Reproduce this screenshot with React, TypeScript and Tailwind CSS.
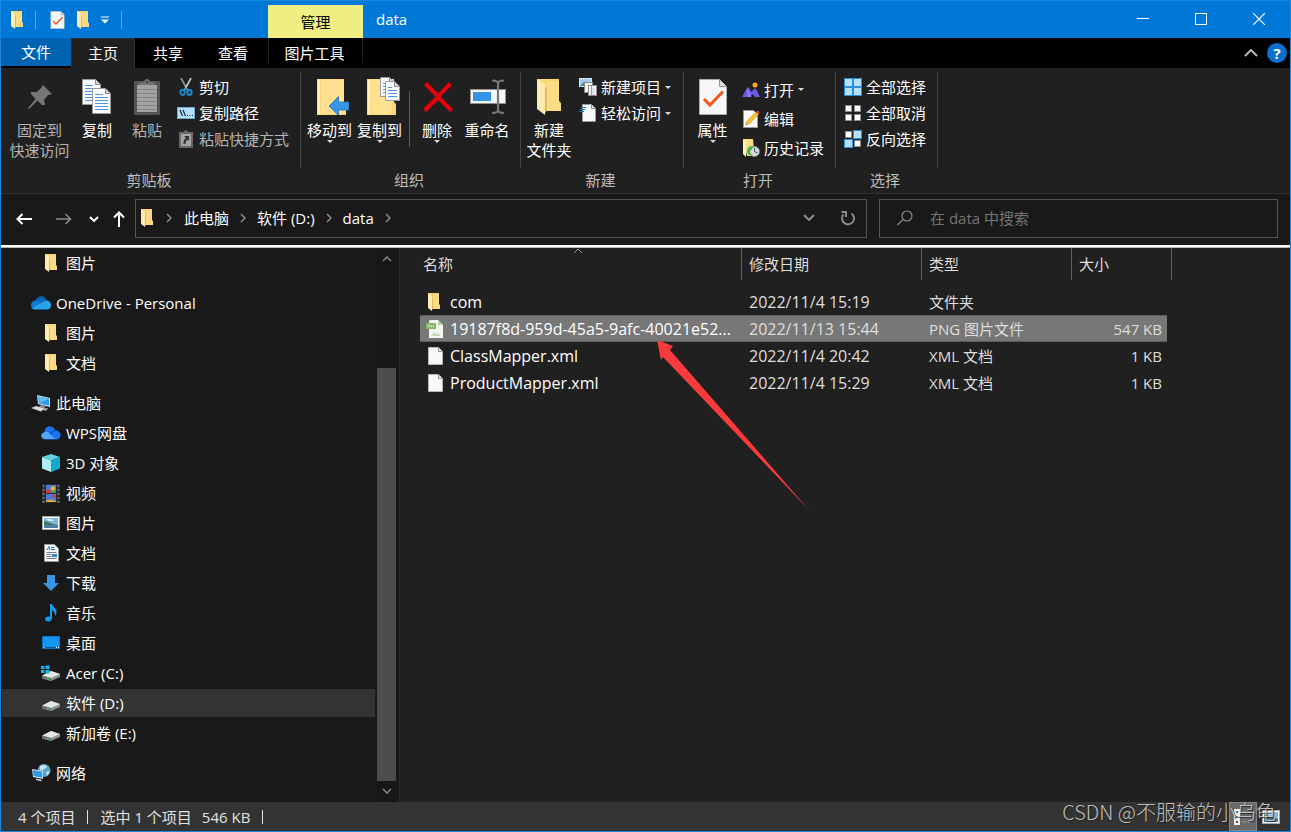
import type { ReactNode } from "react"

/* ---------- icons ---------- */

function Folder({ className = "w-3 h-[18px]" }: { className?: string }) {
  return (
    <svg viewBox="0 0 12 18" className={className} preserveAspectRatio="none">
      <path d="M0 0h11v11l1 1v4H3z" fill="#f7d372" />
      <path d="M5 1h6v11l1 .5V16H4z" fill="#fbdc85" />
      <path d="M0 0l4 2.5V18l-4-3z" fill="#ffecb2" />
      <path d="M4 5v12l.8-1V4z" fill="#d9b252" />
    </svg>
  )
}

function CheckDoc({ className }: { className: string }) {
  return (
    <svg viewBox="0 0 28 36" className={className}>
      <path d="M.5.5h20l7 7v28H.5z" fill="#f6f7f8" stroke="#a9aaac" />
      <path d="M20.5.5v7h7" fill="#dcdde0" stroke="#8f9092" />
      <path d="M5 20l6 6 13-13.500" fill="none" stroke="#f0561d" strokeWidth="3" />
    </svg>
  )
}

function Pin() {
  return (
    <svg viewBox="0 0 26 26" className="w-[26px] h-[26px]">
      <path d="M16 1l9 9-3 1-1 0-4 5 1 5-3 0-4.500-4.500L2 25l-1-1 7.500-9L4 10l0-2 6 0 4-4z" fill="#767676" />
    </svg>
  )
}

function Page({ x, y, w = 19, h = 26 }: { x: number; y: number; w?: number; h?: number }) {
  const lines = [5, 8, 11, 14, 17, 20].filter((l) => l < h - 3)
  return (
    <g transform={`translate(${x} ${y})`}>
      <path d={`M.5.5h${w - 6}l5 5v${h - 6}H.5z`} fill="#fafbfc" stroke="#9a9b9d" />
      <path d={`M${w - 5.5}.5v5h5`} fill="#d5d6d8" stroke="#8a8b8d" />
      {lines.map((l) => (
        <path key={l} d={`M3 ${l + 1.5}h${l < 6 ? w - 11 : w - 6}`} stroke="#4f93ea" />
      ))}
    </g>
  )
}

function Copy() {
  return (
    <svg viewBox="0 0 30 36" className="w-[30px] h-9">
      <Page x={0} y={0} />
      <Page x={10} y={9} />
    </svg>
  )
}

function Paste() {
  return (
    <svg viewBox="0 0 26 36" className="w-[26px] h-9">
      <rect x="0" y="2" width="26" height="34" rx="1" fill="#545454" />
      <rect x="3" y="6" width="20" height="27" fill="#a2a2a2" />
      <path d="M3 10.500h20M3 14.500h20M3 18.500h20M3 22.500h20M3 26.500h20M3 30.500h20" stroke="#858585" />
      <path d="M5 6V4l5-1c0-4 6-4 6 0l5 1v2z" fill="#727272" />
      <circle cx="13" cy="3" r="1" fill="#333" />
    </svg>
  )
}

function Scissors() {
  return (
    <svg viewBox="0 0 14 18" className="w-3.5 h-[18px]" fill="none">
      <path d="M2 0l6.500 12" stroke="#8d9499" strokeWidth="1.600" />
      <path d="M12 0L5.500 12" stroke="#c8ced2" strokeWidth="1.600" />
      <ellipse cx="3.500" cy="14.500" rx="2.200" ry="2.500" stroke="#1b8bd4" strokeWidth="1.800" />
      <ellipse cx="10.500" cy="14.500" rx="2.200" ry="2.500" stroke="#1b8bd4" strokeWidth="1.800" />
      <path d="M5 12l2-2 2 2" stroke="#1b8bd4" strokeWidth="1.500" />
    </svg>
  )
}

function CopyPath() {
  return (
    <svg viewBox="0 0 18 12" className="w-[18px] h-3">
      <rect x=".5" y=".5" width="17" height="11" fill="#b5e0fb" stroke="#74a9cf" />
      <path d="M3 3l2.500 6M6 3l2.500 6" stroke="#102a3c" strokeWidth="1.200" />
      <path d="M10 8.500h1M12.500 8.500h1M15 8.500h1" stroke="#102a3c" />
    </svg>
  )
}

function PasteShortcut() {
  return (
    <svg viewBox="0 0 14 18" className="w-3.5 h-[18px]">
      <path d="M0 2h4l3-2 3 2h4v16H0z" fill="#686868" />
      <rect x="2" y="4" width="10" height="12" fill="#a5a5a5" />
      <path d="M5 6h5v5L8.500 9.500C6.500 11 6.500 12.500 6.500 14h-2c-.5-3 1-5 2.500-6z" fill="#333" />
    </svg>
  )
}

function MoveTo() {
  return (
    <svg viewBox="0 0 32 36" className="w-8 h-9 ml-1.5">
      <path d="M0 0h27v24l2 2v10H0z" fill="#fbd978" />
      <path d="M1 1h2v34H1z" fill="#fff0c0" />
      <path d="M4 1h23v34H4z" fill="#ffe291" />
      <path d="M12 27l9.500-9.500V23H32v8H21.500v5.500z" fill="#3a96e4" stroke="#1f74c0" strokeWidth=".8" />
    </svg>
  )
}

function CopyTo() {
  return (
    <svg viewBox="0 0 34 38" className="w-[34px] h-[38px] -mt-0.5 ml-2">
      <path d="M0 2h27v23l2 2v11H0z" fill="#fbd978" />
      <path d="M1 3h2v34H1z" fill="#fff0c0" />
      <path d="M4 3h21v34H4z" fill="#ffe291" />
      <Page x={13} y={0} w={15} h={20} />
      <Page x={18} y={4} w={15} h={20} />
    </svg>
  )
}

function Delete() {
  return (
    <svg viewBox="0 0 30 36" className="w-[30px] h-9 ml-0.5">
      <path d="M1 6l3-3 11 11.500L26 3l3 3-11.500 11.500L30 30l-3 3-12-12L3 33l-3-3 12.500-12.500z" fill="#e8000d" />
    </svg>
  )
}

function Rename() {
  return (
    <svg viewBox="0 0 36 36" className="w-9 h-9 ml-0.5">
      <rect x=".5" y="10.500" width="35" height="14" fill="#f4f6f8" stroke="#8f9193" />
      <rect x="3" y="13" width="18" height="9" fill="#3494e6" />
      <path d="M28 3v29M22 1.500c4 0 6 1 6 3 0-2 2-3 6-3M22 34c4 0 6-1 6-3 0 2 2 3 6 3" stroke="#77787a" strokeWidth="2.200" fill="none" />
    </svg>
  )
}

function NewItem() {
  return (
    <svg viewBox="0 0 18 18" className="w-[18px] h-[18px]">
      <rect x=".5" y=".5" width="12" height="8" fill="#9ccdf0" stroke="#d5e8f5" />
      <path d="M1 8l4-4 4 4z" fill="#4c8a76" />
      <rect x="5.500" y="4.500" width="8" height="10" fill="#f4f4f4" stroke="#888" />
      <rect x="9.500" y="7.500" width="8" height="10" fill="#fff" stroke="#888" />
      <path d="M11 10h5M11 12h5M11 14h5M11 16h5" stroke="#b9c6d8" />
      <path d="M12.500 8v9" stroke="#e08b8b" />
    </svg>
  )
}

function EasyAccess() {
  return (
    <svg viewBox="0 0 18 18" className="w-[18px] h-[18px]">
      <path d="M3.500.5h9l4 4v13h-13z" fill="#f7f8f9" stroke="#999" />
      <path d="M12.500.5v4h4" fill="#ddd" stroke="#888" />
      <path d="M2 3.500h5M1 5.500h5M0 7.500h5" stroke="#1978c8" />
    </svg>
  )
}

function OpenPicture() {
  return (
    <svg viewBox="0 0 18 16" className="w-[18px] h-4">
      <path d="M0 15L5 6c.5-1 1.500-1 2 0l2.500 4L12 7c.7-.8 1.500-.8 2 0l4 8h-5l-2.500-3L8 15z" fill="#6b5ce8" />
      <path d="M5 6l4.500 9H6z" fill="#9d7cf2" />
      <circle cx="13" cy="3" r="2.500" fill="#ffa51f" />
    </svg>
  )
}

function Edit() {
  return (
    <svg viewBox="0 0 18 18" className="w-[18px] h-[18px]">
      <path d="M1.500.5h10l4 4v13h-14z" fill="#f7f8f9" stroke="#999" />
      <path d="M3.500 15l1-3.500L14 2l2.500 2.500L7 14z" fill="#f5c437" stroke="#c48f18" strokeWidth=".6" />
      <path d="M14 2l1-1c1-.8 3 1 2.300 2l-1 1.200z" fill="#dd5048" />
    </svg>
  )
}

function History() {
  return (
    <svg viewBox="0 0 18 18" className="w-[18px] h-[18px]">
      <path d="M1 0h10l1 11v6H5z" fill="#fbdc85" />
      <path d="M1 0l3 2.500V18l-3-3z" fill="#fff0c0" />
      <circle cx="12.500" cy="12.500" r="5" fill="#d7dade" stroke="#85898d" />
      <path d="M12.500 9v3.500l3 1.500" stroke="#4c4f52" fill="none" />
      <path d="M5 13c0-5 3-6.500 6.500-5.500l-2 3.500c-2 0-2 3 .5 5-3 1-4-.5-5-3z" fill="#3eb449" />
    </svg>
  )
}

const SELECT_CELLS = [[0, 0], [9, 0], [0, 9], [9, 9]]

function SelectGrid({ on }: { on: boolean[] }) {
  return (
    <svg viewBox="0 0 18 18" className="w-[18px] h-[18px]">
      {SELECT_CELLS.map(([x, y], i) =>
        on[i] ? (
          <rect key={i} x={x + 0.5} y={y + 0.5} width="8" height="8" fill="#b9e0fb" stroke="#2a8fdf" />
        ) : (
          <rect key={i} x={x + 1.5} y={y + 1.5} width="6" height="6" fill="#fff" stroke="#8b8b8b" />
        ),
      )}
    </svg>
  )
}

function OneDrive() {
  return (
    <svg viewBox="0 0 20 14" className="w-5 h-3.5">
      <path d="M5 4C7-1 14-1 15.500 4.500L10 9z" fill="#0a63bb" />
      <path d="M0 9.500C0 6 3 3.500 6.500 4.500L14 9 4 13.500C2 13.500 0 12 0 9.500z" fill="#0e7bd6" />
      <path d="M15 4.500c3 0 5 2 5 4.800 0 2.500-1.500 4.200-4 4.200H4c-1.500 0-2.500-.8-3-1.500z" fill="#28a5ea" />
    </svg>
  )
}

function ThisPC() {
  return (
    <svg viewBox="0 0 20 17" className="w-5 h-[17px]">
      <path d="M6 0l13 3v9L7 9z" fill="#d5e1ea" />
      <path d="M7 1.200l11 2.600v7L8 8.300z" fill="#2c9ae6" />
      <path d="M7 1.200l11 2.600-9 4z" fill="#61bdf5" />
      <path d="M10 10l5 1.500-2 1.500-5-1z" fill="#8f979d" />
      <path d="M0 13l5-2 9 2.500-4 3z" fill="#d4d9dd" />
      <path d="M12 14l4-1 1 1-3 2z" fill="#aab2b8" />
    </svg>
  )
}

function WpsCloud() {
  return (
    <svg viewBox="0 0 20 14" className="w-5 h-3.5">
      <path d="M3.500 6C4 1 8-1 11 1c2 .5 3 2 3 3.500 3-.5 6 1.500 5.500 5-.3 2.500-2 4-4.500 4H5c-6 0-6-6-1.500-7.500z" fill="#1b73ef" />
      <path d="M3 6.500c3-2 5 0 7 2.500s4 4 6 4H5c-5.500 0-6-5-2-6.500z" fill="#54a6fb" />
      <path d="M9 8l5-3.500" stroke="#0c4fc4" strokeWidth="1.200" />
    </svg>
  )
}

function Cube() {
  return (
    <svg viewBox="0 0 18 18" className="w-[18px] h-[18px]">
      <path d="M9 0l9 3-9 3.500L0 3z" fill="#5fd3e3" />
      <path d="M0 3l9 3.500V18l-9-3.500z" fill="#aeeef4" />
      <path d="M18 3L9 6.500V18l9-3.500z" fill="#16a8cc" />
    </svg>
  )
}

function Video() {
  return (
    <svg viewBox="0 0 18 19" className="w-[18px] h-[19px]">
      <path d="M0 0h18v19H0z" fill="#2b2c2e" />
      <path d="M1.500 1v18M16.500 1v18" stroke="#6b6d70" strokeWidth="2" strokeDasharray="2 2" />
      <path d="M4 1h10v8H4zM4 10h10v8H4z" fill="#4a78dc" />
      <path d="M4 6l4-1 1 4H4zM10 12l3-2v3l-2 1z" fill="#d63a34" />
      <circle cx="11" cy="4.500" r="2.300" fill="#e0b928" />
      <path d="M4 16.500l5-1 5 1.500v1H4z" fill="#dcae2c" />
      <path d="M9 7h5v2H9z" fill="#3b9c47" />
    </svg>
  )
}

function Picture() {
  return (
    <svg viewBox="0 0 18 14" className="w-[18px] h-3.5">
      <rect x=".5" y=".5" width="17" height="13" fill="#fff" stroke="#a8a8a8" />
      <path d="M2 2h14v10H2z" fill="#7fb9ea" />
      <path d="M2 5c4 0 7 3 14 4v1H2z" fill="#3d7a5e" />
      <path d="M2 9h14v3H2z" fill="#4a7fa8" />
      <path d="M4 3h5l3 2H7z" fill="#e2f2fd" />
    </svg>
  )
}

function TextDoc() {
  return (
    <svg viewBox="0 0 15 18" className="w-[15px] h-[18px]">
      <path d="M.5.5h10l4 4v13H.5z" fill="#f8f9fa" stroke="#9a9a9a" />
      <path d="M3 6l2-3.500L6 6M7 3.500h3M7 5.500h4" stroke="#2578c9" fill="none" />
      <path d="M2.500 8.500h10M2.500 10.500h5M2.500 12.500h5M2.500 14.500h10" stroke="#6d7f91" />
      <path d="M8 10h5v3H8z" fill="#3d85bd" />
    </svg>
  )
}

function Download() {
  return (
    <svg viewBox="0 0 16 16" className="w-4 h-4">
      <path d="M4 0h8v8h4l-8 8-8-8h4z" fill="#3b93e3" />
    </svg>
  )
}

function Music() {
  return (
    <svg viewBox="0 0 12 18" className="w-3 h-[18px]">
      <path d="M5 0h2c.5 3 4.500 4 4.500 8 0 1.500-.5 3-1.500 4 .3-3-1-5-3-5.500V14c0 2-1.500 3.500-3.500 3.500S0 16.500 0 15s2-3 5-2.500z" fill="#159bf0" />
    </svg>
  )
}

function Desktop() {
  return (
    <svg viewBox="0 0 18 14" className="w-[18px] h-3.5">
      <rect x=".5" y=".5" width="17" height="12" fill="#1496f5" stroke="#0a72c6" />
      <path d="M1 11.500h16" stroke="#0a5596" />
      <path d="M1.500 11.500h1M14 11.500h1M16 11.500h1" stroke="#fff" />
    </svg>
  )
}

function Drive({ system = false }: { system?: boolean }) {
  return (
    <svg viewBox="0 0 20 16" className="w-5 h-4">
      <path d="M1 11l9-5 9 3v3l-9 4-9-2.500z" fill="#8e9194" />
      <path d="M1 10.500L10 6l9 3-9 4z" fill="#e3e5e7" />
      <path d="M1 10.500L10 13v3l-9-2.500z" fill="#6d7073" />
      <path d="M6 13.500l2 .5" stroke="#43d64f" strokeWidth="1.500" />
      {system && <path d="M0 1h3.500v3H0zM4.500 .5h4V4h-4zM0 5h3.500v3H0zM4.500 5h4v3.500h-4z" fill="#17b4ee" />}
    </svg>
  )
}

function Network() {
  return (
    <svg viewBox="0 0 19 18" className="w-[19px] h-[18px]">
      <circle cx="12" cy="6.500" r="6.500" fill="#5aa4c9" />
      <path d="M8 2c3-2 6-1 7 1l-4 3-3 0zM14 8l4-1-3 5z" fill="#c3e3ef" />
      <path d="M0 5l11 2v8L1 13z" fill="#cfe6f5" />
      <path d="M.8 6l9.500 1.800v6L1.500 12z" fill="#2b9be8" />
      <path d="M4 14.500l5 1 1 2-6-1.500z" fill="#c4cacd" />
    </svg>
  )
}

function BlankDoc() {
  return (
    <svg viewBox="0 0 15 18" className="w-[15px] h-[18px]">
      <path d="M.5.5h10l4 4v13H.5z" fill="#f8f8f8" stroke="#b5b5b5" />
      <path d="M10.500.5v4h4" fill="#dedede" stroke="#969696" />
    </svg>
  )
}

function PngDoc() {
  return (
    <svg viewBox="0 0 17 18" className="w-[17px] h-[18px]">
      <path d="M4 0h8l5 5v13H3V1z" fill="#f3f7f2" />
      <path d="M12 0v5h5z" fill="#b5cfaa" />
      <rect x="0" y="3" width="10" height="6" fill="#82b366" />
      <path d="M2 7.500V5h1.500v1.500M5 7.500V5l1 2V5M8.500 5H7.500v2h1" stroke="#e5f2de" strokeWidth=".6" fill="none" />
      <path d="M5 16l3-4 2 2 1.500-1.500L15 16z" fill="#c3dcb8" />
    </svg>
  )
}

function Chevron({ d = "M1 1l4 4 4-4", className = "w-2.5 h-1.5", width = 1.5, box = "0 0 10 6" }: { d?: string; className?: string; width?: number; box?: string }) {
  return (
    <svg viewBox={box} className={className} fill="none" stroke="currentColor" strokeWidth={width}>
      <path d={d} />
    </svg>
  )
}

function Caret() {
  return (
    <svg viewBox="0 0 6 3" className="w-1.5 h-[3px] shrink-0">
      <path d="M0 0h6L3 3z" fill="#dcdcdc" />
    </svg>
  )
}

/* ---------- ribbon ---------- */

function BigButton({ icon, lines, width, caret, disabled }: { icon: ReactNode; lines: string[]; width: string; caret?: boolean; disabled?: boolean }) {
  return (
    <button className={`${width} flex flex-col items-center pt-[10px] shrink-0 ${disabled ? "text-[#b4b4b4]" : "text-white"}`}>
      <span className="h-9 mb-[5px] flex items-center justify-center">{icon}</span>
      {lines.map((line) => (
        <span key={line} className="leading-5 whitespace-nowrap">{line}</span>
      ))}
      {caret && <Caret />}
    </button>
  )
}

function SmallButton({ icon, label, caret, disabled, tall }: { icon: ReactNode; label: string; caret?: boolean; disabled?: boolean; tall?: boolean }) {
  return (
    <button className={`flex items-center gap-1 whitespace-nowrap ${tall ? "h-[29px]" : "h-[26px]"} ${disabled ? "text-[#b4b4b4]" : "text-white"}`}>
      <span className="w-[18px] flex justify-center">{icon}</span>
      {label}
      {caret && <Caret />}
    </button>
  )
}

function Group({ label, width, children }: { label: string; width: string; children: ReactNode }) {
  return (
    <section aria-label={label} className={`${width} shrink-0 flex flex-col relative`}>
      <div className="flex-1 flex items-start pl-1">{children}</div>
      <div className="h-[26px] leading-[26px] pr-1 text-center text-[#bdbdbd]">{label}</div>
      <div className="absolute right-0 top-[3px] h-24 w-px bg-[#454545]" />
    </section>
  )
}

function Ribbon() {
  return (
    <div className="h-[125px] bg-[#202020] border-b border-[#303030] flex">
      <Group label="剪贴板" width="w-[300px]">
        <BigButton icon={<Pin />} lines={["固定到", "快速访问"]} width="w-[69px]" disabled />
        <BigButton icon={<Copy />} lines={["复制"]} width="w-[46px]" />
        <BigButton icon={<Paste />} lines={["粘贴"]} width="w-[54px]" disabled />
        <div className="flex flex-col items-start pt-[5px] pl-[3px]">
          <SmallButton icon={<Scissors />} label="剪切" />
          <SmallButton icon={<CopyPath />} label="复制路径" />
          <SmallButton icon={<PasteShortcut />} label="粘贴快捷方式" disabled />
        </div>
      </Group>
      <Group label="组织" width="w-[220px]">
        <BigButton icon={<MoveTo />} lines={["移动到"]} width="w-[49px]" caret />
        <BigButton icon={<CopyTo />} lines={["复制到"]} width="w-[51px]" caret />
        <div className="w-px h-14 bg-[#5a5a5a] mt-[22px] ml-1 mr-0.5" />
        <BigButton icon={<Delete />} lines={["删除"]} width="w-[50px]" caret />
        <BigButton icon={<Rename />} lines={["重命名"]} width="w-[50px]" />
      </Group>
      <Group label="新建" width="w-[163px]">
        <BigButton icon={<Folder className="w-6 h-9" />} lines={["新建", "文件夹"]} width="w-[48px]" />
        <div className="flex flex-col items-start pt-[5px] pl-1.5">
          <SmallButton icon={<NewItem />} label="新建项目" caret />
          <SmallButton icon={<EasyAccess />} label="轻松访问" caret />
        </div>
      </Group>
      <Group label="打开" width="w-[152px]">
        <BigButton icon={<CheckDoc className="w-7 h-9" />} lines={["属性"]} width="w-[49px]" caret />
        <div className="flex flex-col items-start pt-1.5 pl-[5px]">
          <SmallButton icon={<OpenPicture />} label="打开" caret tall />
          <SmallButton icon={<Edit />} label="编辑" tall />
          <SmallButton icon={<History />} label="历史记录" tall />
        </div>
      </Group>
      <Group label="选择" width="w-[102px]">
        <div className="flex flex-col items-start pt-[5px] pl-1">
          <SmallButton icon={<SelectGrid on={[true, true, true, true]} />} label="全部选择" />
          <SmallButton icon={<SelectGrid on={[false, false, false, false]} />} label="全部取消" />
          <SmallButton icon={<SelectGrid on={[false, true, true, false]} />} label="反向选择" />
        </div>
      </Group>
    </div>
  )
}

/* ---------- title + tabs ---------- */

function TitleBar() {
  return (
    <header className="h-[38px] shrink-0 bg-[#0078d7] border-t border-[#1a86dc] flex text-white pr-0.5">
      <div className="w-[267px] shrink-0 flex items-center pl-2.5">
        <Folder />
        <span className="w-px h-[18px] bg-[#5fa9e4] ml-3 mr-3.5" />
        <button aria-label="属性"><CheckDoc className="w-[15px] h-[18px]" /></button>
        <button aria-label="新建文件夹" className="ml-3"><Folder /></button>
        <button aria-label="自定义快速访问工具栏" className="ml-3">
          <svg viewBox="0 0 8 8" className="w-2 h-2">
            <path d="M0 1h8" stroke="#fff" />
            <path d="M0 3.500h8L4 7.500z" fill="#fff" />
          </svg>
        </button>
        <span className="w-px h-[18px] bg-[#5fa9e4] ml-3" />
      </div>
      <div className="w-[95px] mt-1 bg-[#eeee82] text-black flex items-center justify-center">管理</div>
      <h1 className="flex-1 pl-[13px] pb-0.5 flex items-center">data</h1>
      <button aria-label="最小化" className="w-[58px] flex items-center justify-center pb-0.5">
        <span className="w-3 h-px bg-white" />
      </button>
      <button aria-label="最大化" className="w-[58px] flex items-center justify-center pb-0.5">
        <span className="w-3 h-3 border border-white" />
      </button>
      <button aria-label="关闭" className="w-[58px] flex items-center justify-center pb-0.5">
        <Chevron box="0 0 12 12" className="w-3 h-3" width={1.1} d="M0 0l12 12M12 0L0 12" />
      </button>
    </header>
  )
}

function Tabs() {
  return (
    <nav className="h-[31px] shrink-0 bg-black border-b border-[#202020] flex text-white">
      <button className="w-[70px] h-7 bg-[#0063b1]">文件</button>
      <button className="w-[64px] h-[31px] pb-0.5 bg-[#202020] border-x border-t border-[#2d2d2d]">主页</button>
      <button className="w-[66px]">共享</button>
      <button className="w-[66px] pr-0.5 mr-px">查看</button>
      <button className="w-[95px] h-[25px] pt-1 pr-0.5 border-x border-[#202020]">图片工具</button>
      <div className="flex-1" />
      <button aria-label="折叠功能区" className="w-6 text-[#b8b8b8] flex items-center justify-center mr-1">
        <Chevron box="0 0 14 8" className="w-3.5 h-2" width={2} d="M1 7l6-6 6 6" />
      </button>
      <button aria-label="帮助" className="mr-[3px] flex items-center">
        <span className="w-5 h-5 rounded-full bg-[#0a6fd0] font-bold leading-5 text-center">?</span>
      </button>
    </nav>
  )
}

/* ---------- address bar ---------- */

function AddressBar() {
  const crumbs = ["此电脑", "软件 (D:)", "data"]
  return (
    <div className="h-[51px] shrink-0 bg-[#191919] flex items-center pr-3 pb-0.5 text-white">
      <button aria-label="后退" className="ml-[15px]">
        <Chevron box="0 0 16 12" className="w-4 h-3" width={2} d="M16 6H1M6.500 1l-5 5 5 5" />
      </button>
      <button aria-label="前进" className="ml-6 text-[#8a8a8a]">
        <Chevron box="0 0 16 12" className="w-4 h-3" width={1.600} d="M0 6h15M9.500 1l5 5-5 5" />
      </button>
      <button aria-label="最近浏览的位置" className="ml-[17px]">
        <Chevron width={2} />
      </button>
      <button aria-label="上移" className="ml-3.5">
        <Chevron box="0 0 12 16" className="w-3 h-4" width={2} d="M6 16V1M1 6.500l5-5 5 5" />
      </button>
      <div className="flex-1 h-[39px] ml-2.5 border border-[#535353] flex items-center pl-[5px] pb-0.5">
        <Folder />
        <span className="ml-[13px] mr-3 text-[#8a8a8a]"><Chevron box="0 0 6 10" className="w-1.5 h-2.5" d="M1 1l4 4-4 4" /></span>
        {crumbs.map((crumb) => (
          <div key={crumb} className="flex items-center">
            <button>{crumb}</button>
            <span className="ml-[11px] mr-[11px] text-[#8a8a8a]"><Chevron box="0 0 6 10" className="w-1.5 h-2.5" d="M1 1l4 4-4 4" /></span>
          </div>
        ))}
        <div className="flex-1" />
        <button aria-label="以前的位置" className="mr-[25px] text-[#8a8a8a]">
          <Chevron box="0 0 12 7" className="w-3 h-[7px]" width={2} d="M1 1l5 5 5-5" />
        </button>
        <button aria-label="刷新" className="mr-2.5 text-[#8a8a8a]">
          <Chevron box="0 0 16 16" className="w-4 h-4" width={2} d="M3.500 4.500A6 6 0 1 0 11.500 3.500M1.500 2H6V7" />
        </button>
      </div>
      <label className="w-[399px] h-[39px] ml-3 border border-[#535353] flex items-center pl-4 pb-0.5 text-[#8a8a8a]">
        <Chevron box="0 0 18 16" className="w-[18px] h-4" width={1.200} d="M1.500 15L7 9.500M6 6a5 5 0 1 0 10 0a5 5 0 1 0-10 0" />
        <input type="search" aria-label="搜索" placeholder="在 data 中搜索" className="flex-1 ml-4 bg-transparent outline-none placeholder:text-[#757575]" />
      </label>
    </div>
  )
}

/* ---------- navigation pane ---------- */

type NavItem = { label: string; icon: ReactNode; root?: boolean; gap?: boolean; active?: boolean }

const NAV: NavItem[] = [
  { label: "图片", icon: <Folder /> },
  { label: "OneDrive - Personal", icon: <OneDrive />, root: true, gap: true },
  { label: "图片", icon: <Folder /> },
  { label: "文档", icon: <Folder /> },
  { label: "此电脑", icon: <ThisPC />, root: true, gap: true },
  { label: "WPS网盘", icon: <WpsCloud /> },
  { label: "3D 对象", icon: <Cube /> },
  { label: "视频", icon: <Video /> },
  { label: "图片", icon: <Picture /> },
  { label: "文档", icon: <TextDoc /> },
  { label: "下载", icon: <Download /> },
  { label: "音乐", icon: <Music /> },
  { label: "桌面", icon: <Desktop /> },
  { label: "Acer (C:)", icon: <Drive system /> },
  { label: "软件 (D:)", icon: <Drive />, active: true },
  { label: "新加卷 (E:)", icon: <Drive /> },
  { label: "网络", icon: <Network />, root: true, gap: true },
]

function Sidebar() {
  return (
    <aside className="w-[399px] shrink-0 bg-[#191919] border-r border-[#2b2b2b] flex overflow-hidden text-white">
      <nav className="flex-1 flex flex-col pl-px">
        {NAV.map((item, i) => (
          <button
            key={i}
            className={`h-7 my-px flex items-center gap-[5px] shrink-0 ${item.root ? "pl-[29px]" : "pl-[39px]"} ${item.gap ? "mt-[11px]" : ""} ${item.active ? "bg-[#333333]" : ""}`}
          >
            <span className="w-5 flex justify-center shrink-0">{item.icon}</span>
            {item.label}
          </button>
        ))}
      </nav>
      <div className="w-[19px] ml-0.5 mr-[3px] bg-[#171717] flex flex-col items-center text-[#868686]">
        <span className="h-[120px] pt-2"><Chevron d="M1 5l4-4 4 4" /></span>
        <span className="flex-1 w-full bg-[#4d4d4d]" />
        <span className="h-[21px] pt-[7px]"><Chevron /></span>
      </div>
    </aside>
  )
}

/* ---------- file list ---------- */

const FILES = [
  { name: "com", icon: <Folder />, date: "2022/11/4 15:19", type: "文件夹", size: "" },
  { name: "19187f8d-959d-45a5-9afc-40021e52...", icon: <PngDoc />, date: "2022/11/13 15:44", type: "PNG 图片文件", size: "547 KB", selected: true },
  { name: "ClassMapper.xml", icon: <BlankDoc />, date: "2022/11/4 20:42", type: "XML 文档", size: "1 KB" },
  { name: "ProductMapper.xml", icon: <BlankDoc />, date: "2022/11/4 15:29", type: "XML 文档", size: "1 KB" },
]

function FileList() {
  const head = "h-8 p-0 pl-[7px] text-left font-normal border-r border-[#636363]"
  return (
    <main className="flex-1 bg-[#202020] pl-5 relative text-[#dedede]">
      <table className="w-[752px] table-fixed border-separate border-spacing-0 whitespace-nowrap">
        <colgroup>
          <col className="w-[322px]" />
          <col className="w-[180px]" />
          <col className="w-[150px]" />
          <col className="w-[95px]" />
          <col className="w-[5px]" />
        </colgroup>
        <thead>
          <tr>
            <th className="h-8 p-0 pl-[3px] text-left font-normal border-r border-[#636363] relative">
              名称
              <span className="absolute top-0 left-[153px] text-[#9a9a9a]">
                <Chevron d="M1 5l4-4 4 4" width={1} className="w-2.5 h-1.5" />
              </span>
            </th>
            <th className={head}>修改日期</th>
            <th className={head}>类型</th>
            <th className={head} colSpan={2}>大小</th>
          </tr>
          <tr className="h-2" />
        </thead>
        <tbody>
          {FILES.map((file) => {
            const cell = file.selected ? "bg-[#777777] border-y border-[#5c5c5c]" : ""
            return (
              <tr key={file.name} className="h-[27px]">
                <td className={`p-0 ${cell}`}>
                  <span className="flex items-center text-[16px] leading-5 text-white">
                    <span className={`w-[22px] ml-1.5 mr-0.5 flex shrink-0 ${file.selected ? "" : "pl-0.5"}`}>{file.icon}</span>
                    {file.name}
                  </span>
                </td>
                <td className={`p-0 pl-[7px] text-[16px] leading-5 ${cell}`}>{file.date}</td>
                <td className={`p-0 pl-[7px] ${cell}`}>{file.type}</td>
                <td className={`p-0 pr-[5px] text-right ${cell}`}>{file.size}</td>
                <td />
              </tr>
            )
          })}
        </tbody>
      </table>
      <svg viewBox="0 0 152 170" className="absolute left-[257px] top-[92px] w-[152px] h-[170px]">
        <path d="M0 0l16 6-3 4 139 160L6 17l-2 3z" fill="#fb3b3b" />
      </svg>
    </main>
  )
}

function StatusBar() {
  return (
    <footer className="h-[29px] shrink-0 bg-[#333333] text-[#e2e2e2] flex items-center pl-[17px] relative">
      <span>4 个项目</span>
      <span className="w-px h-3.5 bg-[#e2e2e2] mx-3" />
      <span>选中 1 个项目</span>
      <span className="ml-2.5">546 KB</span>
      <span className="w-px h-3.5 bg-[#e2e2e2] ml-3" />
      <div className="flex-1" />
      <button aria-label="详细信息" className="w-7 h-[29px] bg-[#6a6a6a] border border-[#858585] flex items-center justify-center">
        <svg viewBox="0 0 18 16" className="w-[18px] h-4">
          <path d="M0 0h6v16H0z" fill="#f0f0f0" />
          <path d="M2 3h2M2 8h2" stroke="#287f9b" strokeWidth="2" />
          <path d="M2 13h2" stroke="#b3322a" strokeWidth="2" />
          <path d="M8 3h4M13 3h4M8 8h4M13 8h4M8 13h4M13 13h4" stroke="#999" />
        </svg>
      </button>
      <button aria-label="大缩略图" className="ml-[5px] mr-2.5"><Picture /></button>
      <span className="absolute right-3.5 bottom-[5px] h-7 leading-7 text-[20px] font-light text-[#d2d2d2]/90 whitespace-nowrap pointer-events-none font-['Noto_Sans_CJK_SC',sans-serif] [text-shadow:1px_1px_1px_#222]">
        CSDN @不服输的小乌龟
      </span>
    </footer>
  )
}

export default function App() {
  return (
    <div className="h-screen flex flex-col overflow-hidden border-x border-b border-[#1a86dc] bg-[#202020] text-[15px] leading-5 font-['Open_Sans','Noto_Sans_CJK_SC',sans-serif]">
      <TitleBar />
      <Tabs />
      <Ribbon />
      <AddressBar />
      <div className="h-[3px] shrink-0 bg-white border-b border-[#b9b9b9]" />
      <div className="flex-1 flex min-h-0">
        <Sidebar />
        <FileList />
      </div>
      <StatusBar />
    </div>
  )
}
